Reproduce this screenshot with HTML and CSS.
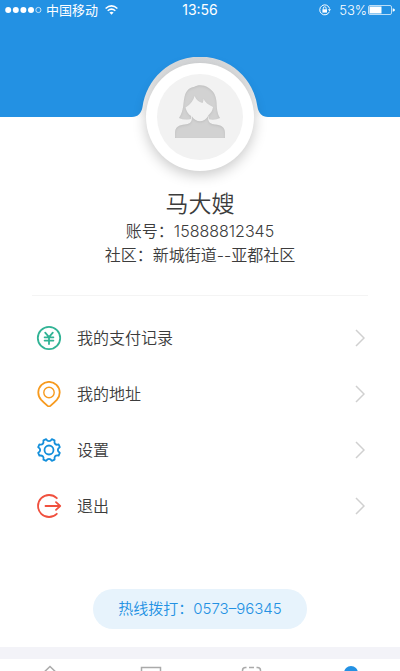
FILE: index.html
```html
<!DOCTYPE html>
<html lang="zh-CN">
<head>
<meta charset="utf-8">
<meta name="viewport" content="width=device-width, initial-scale=1">
<title>个人中心</title>
<link rel="stylesheet" href="styles.css">
</head>
<body>
<div class="app">
  <header class="hero">
    <div class="status">
      <div class="status-side">
        <svg class="signal" width="37" height="8" viewBox="0 0 37 8" aria-hidden="true"><g fill="#fff"><circle cx="3.2" cy="4" r="3"/><circle cx="10.8" cy="4" r="3"/><circle cx="18.4" cy="4" r="3"/><circle cx="26" cy="4" r="3"/></g><circle cx="33.4" cy="4" r="2.6" fill="none" stroke="#fff" stroke-width=".7"/></svg>
        <span class="carrier">中国移动</span>
        <svg class="wifi" width="13" height="10" viewBox="0 0 13 10" fill="none" stroke="#fff" stroke-width="1.5" aria-hidden="true"><path d="M.6 3.5Q6.5-1.7 12.4 3.5M2.7 5.8Q6.5 2.4 10.3 5.8"/><path d="M4.4 7.5Q6.5 5.8 8.6 7.5L6.5 9.7Z" fill="#fff" stroke="none"/></svg>
      </div>
      <span class="time">13:56</span>
      <div class="status-side status-end">
        <svg class="lock" width="12" height="12" viewBox="0 0 12 12" fill="none" stroke="#fff" aria-hidden="true"><path d="M10.4 7.7A5 5 0 1 1 10.6 4.6"/><path d="M8.9 5.2H12L10.5 7.3Z" fill="#fff" stroke="none"/><path d="M3.4 5.3H8V8.6H3.4Z" fill="#fff" stroke="none"/><path d="M4.3 5.5V4.2a1.4 1.4 0 0 1 2.8 0v1.3" stroke-width=".9"/></svg>
        <span>53%</span>
        <svg width="27" height="10" viewBox="0 0 27 10" aria-hidden="true"><rect x=".5" y=".5" width="23" height="9" rx="1.5" fill="none" stroke="#fff" stroke-width=".7"/><path d="M1.5 1.5H13.5V8.5H1.5Z" fill="#fff"/><path d="M24.7 3.2Q27 4 27 5T24.7 6.8Z" fill="#fff"/></svg>
      </div>
    </div>
  </header>

  <main class="content">
    <section class="profile">
      <div class="portrait">
        <svg class="notch" width="140" height="62" viewBox="0 0 140 62" aria-hidden="true">
          <defs><linearGradient id="rim" x2="0" y2="1"><stop offset="0" stop-color="#d6d8da"/><stop offset=".4" stop-color="#e2e3e4"/><stop offset=".85" stop-color="#f6f6f6"/><stop offset="1" stop-color="#fff"/></linearGradient></defs>
          <path d="M2 60C8 60 11.500 56 12.500 50A58 58 0 0 1 127.500 50C128.500 56 132 60 138 60V62H2Z" fill="url(#rim)"/>
        </svg>
        <div class="avatar">
          <svg width="86" height="86" viewBox="0 0 86 86" role="img" aria-label="头像">
            <defs><filter id="inner" x="-10%" y="-10%" width="120%" height="120%"><feGaussianBlur in="SourceAlpha" stdDeviation="1.200" result="b"/><feOffset in="b" dy="1" result="o"/><feComposite in="SourceAlpha" in2="o" operator="out" result="e"/><feFlood flood-color="#aaa" flood-opacity=".5"/><feComposite in2="e" operator="in" result="s"/><feMerge><feMergeNode in="SourceGraphic"/><feMergeNode in="s"/></feMerge></filter></defs>
            <circle cx="43" cy="43" r="43" fill="#f2f2f2"/>
            <g fill="#d2d2d2" filter="url(#inner)">
              <path fill-rule="evenodd" d="M22 44C27 37 26 29 27.500 23C29 16 33 13.500 37 13C41 10.500 47 11 51 13.500C57 17 59 22 59.500 28C60 35 60 39 63 44Q58 46.500 52 45.300L51.200 41.500C54 39 55.600 36.500 56 33C51.500 31 48 28 46.500 25Q46.500 27.500 45.500 29Q40 27.500 37.500 22Q36 29 28.500 33.500C29.500 37.500 31 40 34 42V45Q27 46.500 22 44Z"/>
              <path d="M18 64V59C18 53 22 51 28 50.500C32 50 34.500 48.500 34.800 45V42.300C37 45.600 40 47.300 43 47.300S49 45.500 51.200 42V45C51.500 48.500 54 50 58 50.500C64 51 68 53 68 59V64Z"/>
            </g>
          </svg>
        </div>
      </div>
      <h1 class="name">马大嫂</h1>
      <p class="info">账号：15888812345</p>
      <p class="info">社区：新城街道--亚都社区</p>
    </section>

    <nav class="menu">
      <a class="item" href="#payments">
        <svg class="icon" viewBox="0 0 26 26" fill="none" stroke="#31b395" stroke-width="1.800" stroke-linecap="round" aria-hidden="true"><circle cx="13" cy="13" r="11.200"/><path d="M9.200 7.600L13 12L16.800 7.600M13 12V19M8.600 12.300H17.400M8.600 15.600H17.400"/></svg>
        <span class="label">我的支付记录</span>
        <svg class="chevron" viewBox="0 0 10 18" aria-hidden="true"><path d="M1 1L9 9L1 17"/></svg>
      </a>
      <a class="item" href="#address">
        <svg class="icon" viewBox="0 0 26 26" fill="none" stroke="#f79a1e" stroke-width="1.800" stroke-linejoin="round" aria-hidden="true"><path d="M13 25.700Q11 24.800 5.200 18.900A10.700 10.700 0 1 1 20.800 18.900Q15 24.800 13 25.700Z"/><circle cx="13" cy="11.500" r="5.200" stroke-width="1.400"/></svg>
        <span class="label">我的地址</span>
        <svg class="chevron" viewBox="0 0 10 18" aria-hidden="true"><path d="M1 1L9 9L1 17"/></svg>
      </a>
      <a class="item" href="#settings">
        <svg class="icon" viewBox="0 0 26 26" fill="none" stroke="#138fdb" stroke-width="1.800" stroke-linejoin="round" aria-hidden="true"><path d="M10.200 2.200Q11.300 4.200 13 4.200T15.800 2.200L18.600 3.400Q18 5.800 19.200 7T22.600 7.400L23.800 10.200Q21.800 11.300 21.800 13T23.800 15.800L22.600 18.600Q20.200 18 19.200 19.200T18.600 22.600L15.800 23.800Q14.700 21.800 13 21.800T10.200 23.800L7.400 22.600Q8 20.200 6.800 19.200T3.400 18.600L2.200 15.800Q4.200 14.700 4.200 13T2.200 10.200L3.400 7.400Q5.800 8 6.800 6.800T7.400 3.400Z"/><circle cx="13" cy="13" r="4.500"/></svg>
        <span class="label">设置</span>
        <svg class="chevron" viewBox="0 0 10 18" aria-hidden="true"><path d="M1 1L9 9L1 17"/></svg>
      </a>
      <a class="item" href="#logout">
        <svg class="icon" viewBox="0 0 26 26" fill="none" stroke="#f0503e" stroke-width="1.800" stroke-linecap="round" stroke-linejoin="round" aria-hidden="true"><path d="M20.800 5.200A11 11 0 1 0 20.800 20.800M9.500 13H24M20 9.200L24.200 13L20 16.800"/></svg>
        <span class="label">退出</span>
        <svg class="chevron" viewBox="0 0 10 18" aria-hidden="true"><path d="M1 1L9 9L1 17"/></svg>
      </a>
    </nav>

    <a class="hotline" href="tel:057396345">热线拨打：0573–96345</a>
  </main>

  <nav class="tabs">
    <a class="tab" href="#home" aria-label="首页"><svg viewBox="0 0 24 24"><path d="M1 12L12 1.500L23 12M5 9V22H19V9"/></svg></a>
    <a class="tab" href="#messages" aria-label="消息"><svg viewBox="0 0 24 24"><path d="M3.500 2.500H22.500V18H3.500Z"/></svg></a>
    <a class="tab" href="#scan" aria-label="扫一扫"><svg viewBox="0 0 24 24"><path d="M4.500 8V5.500Q4.500 2.500 7.500 2.500H8.500M11 2.500H16M18.500 2.500H19.500Q22.500 2.500 22.500 5.500V8M4.500 17V22H9M18 22H22.500V17"/></svg></a>
    <a class="tab active" href="#me" aria-label="我的"><svg viewBox="0 0 24 24"><circle cx="13" cy="8" r="7"/><path d="M2 24Q2 16 13 16T24 24Z"/></svg></a>
  </nav>
</div>
</body>
</html>
```

FILE: styles.css
```css
* {
  box-sizing: border-box;
}

body {
  margin: 0;
  color: #3c3c3c;
  background: #fff;
  font-family: Inter, "Noto Sans CJK SC", sans-serif;
  font-weight: 350;
}

a {
  color: inherit;
  text-decoration: none;
}

svg {
  display: block;
  flex: none;
}

.app {
  height: 100vh;
  overflow: hidden;
}

.hero {
  height: 117px;
  background: #2391e3;
}

.status {
  display: flex;
  align-items: center;
  height: 20px;
  padding: 0 5px;
  color: #fff;
  font-size: 13px;
  line-height: 20px;
}

.status-side {
  display: flex;
  flex: 1;
  align-items: center;
  gap: 4px;
}

.carrier {
  font-weight: 400;
}

.wifi {
  margin-left: 3px;
}

.status-end {
  justify-content: flex-end;
  gap: 1px;
}

.lock {
  margin-right: 7px;
}

.time {
  font-size: 14px;
  font-weight: 400;
}

.content {
  display: flex;
  flex-direction: column;
  padding: 0 32px 18px;
}

.profile {
  padding-bottom: 28px;
  border-bottom: 1px solid #f4f4f4;
  text-align: center;
}

.portrait {
  position: relative;
  display: flex;
  justify-content: center;
  margin-top: -54px;
}

.notch {
  position: absolute;
  top: -6px;
}

.avatar {
  position: relative;
  padding: 11px;
  border-radius: 50%;
  background: #fff;
  box-shadow: 0 4px 14px rgba(0, 0, 0, 0.22);
}

.name {
  margin: 18px 0 0;
  font-size: 23px;
  font-weight: 350;
  line-height: 30px;
}

.info {
  margin: 0;
  font-size: 16px;
  line-height: 24px;
}

.menu {
  padding: 14px 0 15px;
}

.item {
  display: flex;
  align-items: center;
  height: 56px;
  padding: 0 3px 0 4px;
}

.icon {
  width: 26px;
  height: 26px;
}

.label {
  flex: 1;
  margin-left: 15px;
  font-size: 16px;
  line-height: 24px;
}

.chevron {
  width: 10px;
  height: 18px;
  fill: none;
  stroke: #d0d0d0;
  stroke-width: 1.5;
}

.hotline {
  align-self: center;
  margin-top: 40px;
  padding: 0 25px;
  border-radius: 20px;
  color: #2391e3;
  background: #e7f3fc;
  font-size: 15px;
  line-height: 40px;
}

.tabs {
  display: flex;
  height: 61px;
  padding-top: 6px;
  border-top: 12px solid #f3f3f8;
}

.tab {
  display: flex;
  flex: 1;
  justify-content: center;
}

.tab svg {
  width: 24px;
  height: 24px;
  fill: none;
  stroke: #aaa;
  stroke-width: 1.5;
}

.tab.active svg {
  fill: #2391e3;
  stroke: none;
}
```
